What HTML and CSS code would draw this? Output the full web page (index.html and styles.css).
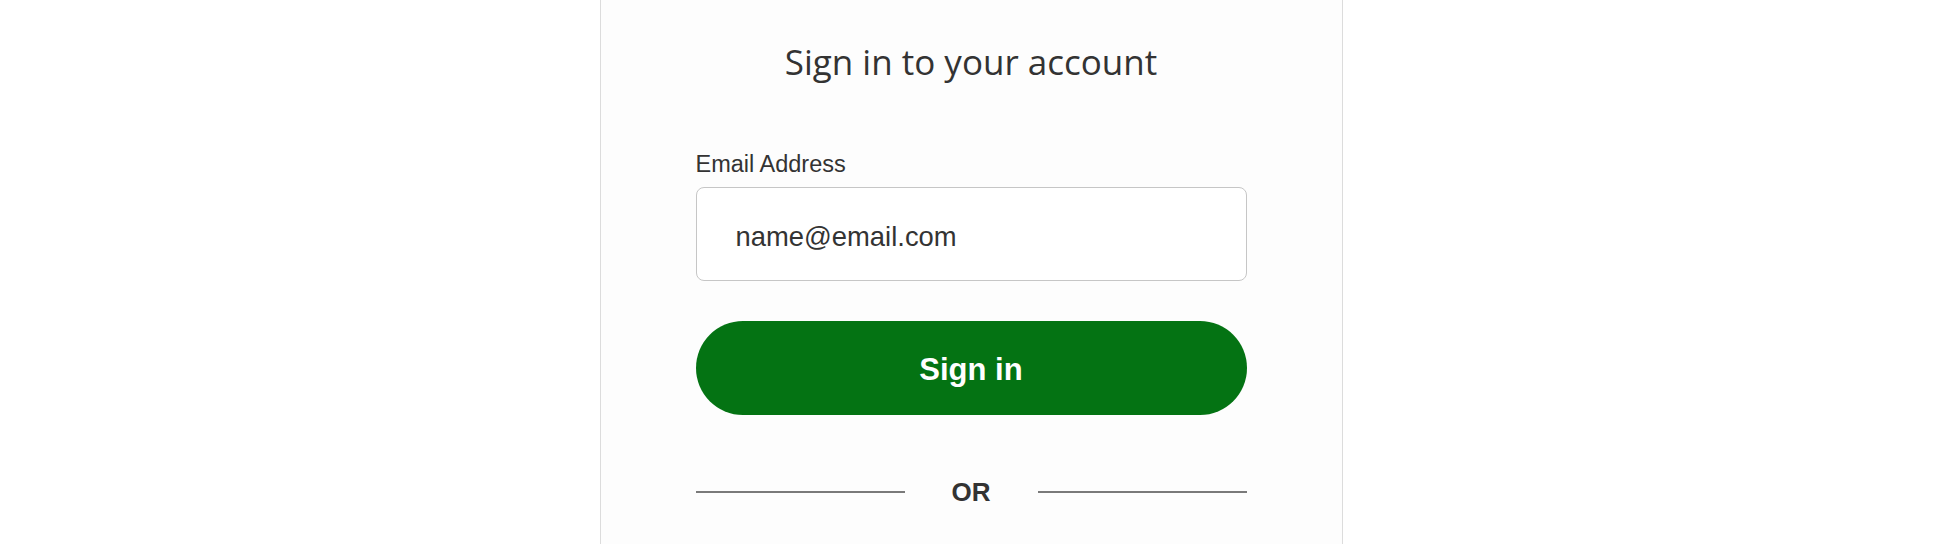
FILE: index.html
```html
<!DOCTYPE html>
<html lang="en">
<head>
<meta charset="utf-8">
<title>Sign in</title>
<link rel="stylesheet" href="styles.css">
</head>
<body>
<div class="page">
  <main class="card">
    <h1 class="title">Sign in to your account</h1>
    <form class="form">
      <label class="label" for="email">Email Address</label>
      <div class="input" id="email">name@email.com</div>
      <button type="button" class="btn">Sign in</button>
      <div class="divider">
        <span class="rule"></span>
        <span class="or">OR</span>
        <span class="rule"></span>
      </div>
    </form>
  </main>
</div>
</body>
</html>
```

FILE: styles.css
```css
html, body {
  margin: 0;
  padding: 0;
  background: #ffffff;
  height: 100%;
  overflow: hidden;
}

.page {
  display: flex;
  justify-content: center;
  height: 100%;
  padding-right: 4px;
  box-sizing: border-box;
}

.card {
  width: 743px;
  box-sizing: border-box;
  height: 100%;
  background: #fdfdfd;
  border-left: 1px solid #dcdcdc;
  border-right: 1px solid #dcdcdc;
  padding: 41px 95px 0;
}

.title {
  margin: 0;
  font-family: "Open Sans", "Noto Sans", sans-serif;
  font-weight: 400;
  font-size: 35px;
  line-height: 42px;
  color: #333333;
  text-align: center;
}

.form {
  display: flex;
  flex-direction: column;
  margin-top: 68px;
}

.label {
  font-family: "Liberation Sans", Arial, sans-serif;
  font-size: 23.5px;
  line-height: 27px;
  color: #333333;
}

.input {
  margin-top: 9px;
  height: 94px;
  box-sizing: border-box;
  border: 1.5px solid #c6c6c6;
  border-radius: 8px;
  background: #ffffff;
  padding: 5px 0 0 39px;
  display: flex;
  align-items: center;
  font-family: "Liberation Sans", Arial, sans-serif;
  font-size: 27.4px;
  color: #333333;
}

.btn {
  margin-top: 40px;
  height: 94px;
  border: none;
  border-radius: 47px;
  background: #047313;
  color: #ffffff;
  font-family: "Liberation Sans", Arial, sans-serif;
  font-weight: 700;
  font-size: 31px;
  padding: 4px 0 0;
  cursor: pointer;
}

.divider {
  margin-top: 62px;
  display: flex;
  align-items: center;
  height: 30px;
}

.rule {
  flex: 1;
  height: 2px;
  background: #7a7a7a;
}

.or {
  margin: 0 47px;
  font-family: "Liberation Sans", Arial, sans-serif;
  font-weight: 700;
  font-size: 26px;
  line-height: 30px;
  color: #333333;
}
```
